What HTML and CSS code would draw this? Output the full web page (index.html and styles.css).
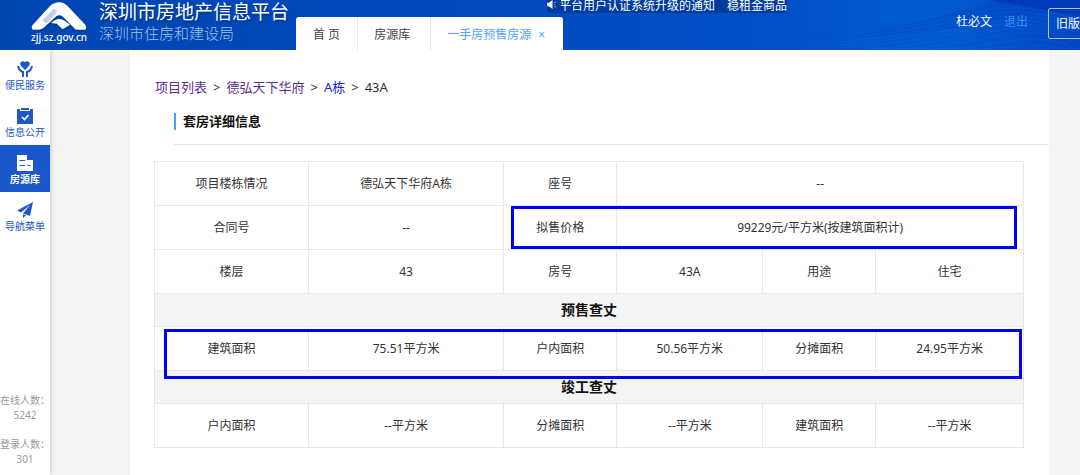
FILE: index.html
```html
<!DOCTYPE html>
<html lang="zh-CN">
<head>
<meta charset="utf-8">
<title>深圳市房地产信息平台</title>
<link rel="stylesheet" href="styles.css">
</head>
<body>
<header class="top">
  <svg class="waves" viewBox="0 0 280 50" preserveAspectRatio="none" aria-hidden="true">
    <defs>
      <linearGradient id="deep" x1="0" x2="1"><stop offset="0" stop-color="#0050cb"/><stop offset=".7" stop-color="#0044c2"/><stop offset="1" stop-color="#0039bb"/></linearGradient>
      <linearGradient id="lit" x1="0" x2="1"><stop offset="0" stop-color="#0050ca"/><stop offset=".5" stop-color="#005bd0"/><stop offset="1" stop-color="#0045c4"/></linearGradient>
    </defs>
    <rect width="280" height="50" fill="url(#lit)"/>
    <path d="M0 38Q110 30 195 0H280V8Q230 14 180 24T0 42Z" fill="url(#deep)" opacity=".45"/>
    <path d="M190 0H280V16Q235 8 190 0Z" fill="#003abb"/>
    <g fill="none" stroke="#2a7be4" stroke-opacity=".25" stroke-width=".7">
      <path d="M40 36Q130 24 180 12T280 22"/><path d="M40 39Q130 28 180 16T280 26"/><path d="M40 42Q130 32 180 20T280 30"/><path d="M40 45Q130 36 180 24T280 34"/><path d="M40 48Q130 40 180 28T280 38"/><path d="M60 50Q140 43 190 32T280 42"/><path d="M90 50Q150 46 200 36T280 46"/><path d="M130 50Q170 48 210 41T280 50"/><path d="M165 50Q200 48 230 46T280 54"/>
    </g>
  </svg>
  <div class="brand">
    <div class="logo">
      <svg viewBox="90 0 174 94" aria-hidden="true">
        <path fill="#fff" d="M97 76 149 19Q160 8 177 7Q193 8 203 18L257 75Q262 83 257 90H228L188 50Q178 42 168 50L129 86Q123 90 115 90H98Q91 84 97 76Z"/>
        <path fill="#0046b5" d="M126 62 162 26 172 36 138 72Z" opacity=".25"/>
        <path fill="#fff" d="M153 70Q174 50 194 63L211 75 188 89 170 72Z"/>
      </svg>
      <span class="domain">zjj.sz.gov.cn</span>
    </div>
    <div class="names">
      <div class="name">深圳市房地产信息平台</div>
      <div class="dept">深圳市住房和建设局</div>
    </div>
  </div>
  <nav class="tabs">
    <button class="tab tab-home" type="button">首 页</button>
    <button class="tab tab-list" type="button">房源库</button>
    <button class="tab tab-on" type="button">一手房预售房源 <span class="close">×</span></button>
  </nav>
  <div class="notice">
    <svg class="speaker" viewBox="0 0 12 10" aria-hidden="true"><path d="M0 3H2L6 0V10L2 7H0Z" fill="#fff"/><path d="M8 3 10 2M8 7 10 8M8 5H9" stroke="#9dbdf0" fill="none"/></svg>
    <div class="ticker"><span>息平台用户认证系统升级的通知</span><span>稳租金商品</span></div>
  </div>
  <div class="user">
    <span>杜必文</span>
    <a class="logout" href="#">退出</a>
    <button class="old" type="button">旧版</button>
  </div>
</header>
<div class="body">
  <aside class="side">
    <nav class="menu">
      <a class="item" href="#">
        <svg viewBox="0 0 16 16" aria-hidden="true"><path fill="currentColor" d="M8 9 4 5Q2 1.500 5 .5 7-.2 8 1.200 9-.2 11 .5 14 1.500 12 5Z"/><path d="M1 5Q2 10 6 11V16M15 5Q14 10 10 11V16" fill="none" stroke="currentColor" stroke-width="2"/></svg>
        <span>便民服务</span>
      </a>
      <a class="item" href="#">
        <svg viewBox="0 0 16 16" aria-hidden="true"><path fill="currentColor" d="M0 1H3V3H13V1H16V16H0ZM4 0H12V2H4Z"/><path d="M5 9 7.500 11.500 11.500 7" fill="none" stroke="#fff" stroke-width="1.600"/></svg>
        <span>信息公开</span>
      </a>
      <a class="item item-on" href="#">
        <svg viewBox="0 0 16 16" aria-hidden="true"><path fill="currentColor" d="M0 0H10V5H16V16H0Z"/><path d="M2.500 5.500H8M2.500 10.500H8M10.500 10.500H13.500" stroke="#1a57cb" stroke-width="1.200"/></svg>
        <span>房源库</span>
      </a>
      <a class="item" href="#">
        <svg viewBox="0 0 16 16" aria-hidden="true"><path fill="currentColor" d="M16 0 0 8.500 4 10.500 13 3 6 11.500 13 14Z"/><path fill="currentColor" d="M6 12.200V16L9 13.300Z"/></svg>
        <span>导航菜单</span>
      </a>
    </nav>
    <div class="stats">
      <div class="stat"><div>在线人数<span class="colon">：</span></div><div>5242</div></div>
      <div class="stat"><div>登录人数<span class="colon">：</span></div><div>301</div></div>
    </div>
  </aside>
  <main class="page">
    <nav class="crumbs">
      <a href="#">项目列表</a><span>&gt;</span><a href="#">德弘天下华府</a><span>&gt;</span><a class="fresh" href="#">A栋</a><span>&gt;</span><span>43A</span>
    </nav>
    <div class="heading"><h1>套房详细信息</h1></div>
    <div class="sheet">
      <table>
        <colgroup><col class="c1"><col class="c2"><col class="c3"><col class="c4"><col class="c5"><col class="c6"></colgroup>
        <tbody>
          <tr><td>项目楼栋情况</td><td>德弘天下华府A栋</td><td>座号</td><td colspan="3">--</td></tr>
          <tr><td>合同号</td><td>--</td><td>拟售价格</td><td colspan="3">99229元/平方米(按建筑面积计)</td></tr>
          <tr><td>楼层</td><td>43</td><td>房号</td><td>43A</td><td>用途</td><td>住宅</td></tr>
          <tr><th colspan="6">预售查丈</th></tr>
          <tr><td>建筑面积</td><td>75.51平方米</td><td>户内面积</td><td>50.56平方米</td><td>分摊面积</td><td>24.95平方米</td></tr>
          <tr><th colspan="6">竣工查丈</th></tr>
          <tr><td>户内面积</td><td>--平方米</td><td>分摊面积</td><td>--平方米</td><td>建筑面积</td><td>--平方米</td></tr>
        </tbody>
      </table>
      <div class="mark mark-price"></div>
      <div class="mark mark-area"></div>
    </div>
  </main>
</div>
</body>
</html>
```
FILE: styles.css
```css
* { box-sizing: border-box; }
body {
  margin: 0;
  min-height: 100vh;
  display: flex;
  flex-direction: column;
  overflow-x: hidden;
  background: #f4f4f4;
  color: #333;
  font: 12px/20px "Noto Sans", "Noto Sans CJK SC", sans-serif;
}
a { text-decoration: none; color: inherit; }
button { font: inherit; color: inherit; margin: 0; border: 0; background: none; white-space: nowrap; }

.top {
  position: relative;
  height: 50px;
  display: flex;
  overflow: hidden;
  color: #fff;
  background: linear-gradient(90deg, #0046b3, #004bbf 50%, #0050ca 75%);
}
.waves { position: absolute; top: 0; right: 0; width: 26%; height: 100%; }
.brand { display: flex; gap: 11px; width: 296px; padding-left: 30px; flex: none; }
.logo { width: 58px; display: flex; flex-direction: column; align-items: center; }
.logo svg { width: 58px; height: 31px; filter: drop-shadow(1px 1px 1px #00308a); }
.domain { font-size: 10px; font-weight: 500; line-height: 12px; }
.names { white-space: nowrap; }
.name { font-size: 19px; line-height: 25px; font-weight: 400; text-shadow: 1px 2px 2px #00308a; }
.dept { font-size: 15px; line-height: 17px; font-weight: 300; color: #a3c1f0; }

.tabs {
  align-self: flex-end;
  display: flex;
  height: 33px;
  background: #fff;
  border-radius: 3px 3px 0 0;
  color: #444;
}
.tab { padding: 3px 16px 0; }
.tab + .tab { border-left: 1px solid #e8e8ee; }
.tab-home { padding: 3px 17px 0; }
.tab-list { padding-right: 20px; }
.tab-on { color: #52a5fa; padding-right: 18px; }
.close { margin-left: 4px; }

.notice {
  position: absolute;
  top: 0;
  left: 547px;
  width: 240px;
  display: flex;
  align-items: flex-start;
  gap: 3px;
  background: #003c9c;
  border-radius: 0 0 3px 3px;
}
.speaker { width: 11px; height: 9px; flex: none; }
.ticker {
  flex: 1;
  display: flex;
  justify-content: flex-end;
  gap: 12px;
  overflow: hidden;
  white-space: nowrap;
  line-height: 12px;
  padding-bottom: 1px;
}
.user { position: relative; margin-left: auto; display: flex; gap: 12px; align-items: flex-start; line-height: 20px; padding-top: 8px; flex: none; }
.user > span, .logout { margin-top: 4px; }
.logout { color: #3b8df5; }
.old { height: 31px; padding: 0 7px; margin-left: 8px; margin-right: -8px; border: 1px solid #a9c4f0; border-radius: 2px; }

.body { flex: 1; display: flex; }
.side {
  width: 50px;
  flex: none;
  display: flex;
  flex-direction: column;
  padding: 1px 0 8px;
  background: #fff;
  box-shadow: 1px 0 4px #ccc;
  font-size: 10px;
  line-height: 14px;
}
.item { display: flex; flex-direction: column; align-items: center; gap: 1px; height: 47px; padding-top: 10px; color: #2158c5; white-space: nowrap; }
.item svg { width: 16px; height: 16px; }
.item-on { background: #1a57cb; color: #fff; font-weight: 600; }
.stats { margin-top: auto; display: flex; flex-direction: column; gap: 14px; color: #999; text-align: center; line-height: 15px; white-space: nowrap; }
.colon { font-family: "Noto Sans CJK TC", sans-serif; line-height: 1; }

.page { flex: 1; min-width: 0; margin: 0 31px 0 80px; padding: 27px 0 20px; background: #fff; }
.crumbs { display: flex; gap: 6px; padding-left: 25px; font-size: 13px; }
.crumbs a { color: #5b2d91; }
.crumbs a.fresh { color: #1a1aee; }
.heading { margin: 16px 0 16px 44px; padding-bottom: 14px; border-bottom: 1px solid #e9e9e9; }
h1 { margin: 0; padding-left: 7px; border-left: 2px solid #4f9ff8; font-size: 13px; line-height: 17px; font-weight: 600; color: #111; }

.sheet { position: relative; margin: 0 25px 0 24px; }
table { width: 100%; table-layout: fixed; border-collapse: collapse; }
.c1 { width: 17.7%; }
.c2 { width: 22.5%; }
.c3 { width: 13%; }
.c4 { width: 16.8%; }
.c5 { width: 13%; }
.c6 { width: 17%; }
td, th { border: 1px solid #e7e7e7; padding: 0; text-align: center; }
td { height: 44px; }
th { height: 33px; background: #f4f4f4; color: #111; font-size: 14px; font-weight: 600; }
.mark { position: absolute; border: 3px solid #0000fa; pointer-events: none; }
.mark-price { top: 45px; left: 41%; right: 7px; height: 43px; }
.mark-area { top: 168px; left: 10px; right: 2px; height: 50px; }
```
